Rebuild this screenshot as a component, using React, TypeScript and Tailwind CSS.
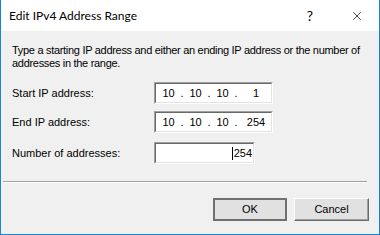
import { X } from 'lucide-react';

function Sunken({ className, children }: { className: string; children?: React.ReactNode }) {
  return (
    <div className={`border border-t-[#a0a0a0] border-l-[#a0a0a0] border-b-white border-r-white ${className}`}>
      <div className="flex h-full items-center border border-t-[#696969] border-l-[#696969] border-b-[#e3e3e3] border-r-[#e3e3e3] bg-white">
        {children}
      </div>
    </div>
  );
}

function IpField({ parts }: { parts: string[] }) {
  return (
    <Sunken className="h-[22px] w-[119px]">
      <div className="flex w-full pl-[4px]">
        <span className="w-[17px] text-center">{parts[0]}</span>
        <span className="w-[10px] text-center">.</span>
        <span className="w-[17px] text-center">{parts[1]}</span>
        <span className="w-[10px] text-center">.</span>
        <span className="w-[17px] text-center">{parts[2]}</span>
        <span className="w-[10px] text-center">.</span>
        <span className="flex-1 text-center">{parts[3]}</span>
      </div>
    </Sunken>
  );
}

export default function App() {
  return (
    <div
      className="flex h-[235px] w-[380px] flex-col border-x border-b border-[#1883d7] bg-[#f0f0f0] text-[11px] text-black"
      style={{ fontFamily: '"Liberation Sans", Arial, sans-serif' }}
    >
      <div className="flex h-[31px] shrink-0 items-center bg-white pl-[8px]">
        <span className="text-[12px]" style={{ fontFamily: 'Lato, "Noto Sans", sans-serif' }}>
          Edit IPv4 Address Range
        </span>
        <span className="ml-auto mr-[37px] text-[14px]" style={{ fontFamily: 'Lato, sans-serif' }}>
          ?
        </span>
        <X className="mr-[15px] h-[14px] w-[14px]" strokeWidth={1.2} />
      </div>

      <div className="px-[11px] pt-[13px] leading-[13px] tracking-[-0.3px]">
        Type a starting IP address and either an ending IP address or the number of addresses in the range.
      </div>

      <div className="mt-[12px] flex flex-col gap-[7px] pl-[11px]">
        <div className="flex items-center">
          <span className="w-[142px]">Start IP address:</span>
          <IpField parts={['10', '10', '10', '1']} />
        </div>
        <div className="flex items-center">
          <span className="w-[142px]">End IP address:</span>
          <IpField parts={['10', '10', '10', '254']} />
        </div>
        <div className="mt-[2px] flex items-center">
          <span className="w-[142px]">Number of addresses:</span>
          <Sunken className="h-[22px] w-[101px]">
            <div className="flex w-full justify-end pr-[1px]">
              <span className="mr-[1px] h-[13px] w-px self-center bg-black" />
              <span>254</span>
            </div>
          </Sunken>
        </div>
      </div>

      <div className="ml-[2px] mr-[12px] mt-[17px] border-b border-t border-b-white border-t-[#a0a0a0]" />

      <div className="mt-[15px] flex justify-end gap-[7px] pr-[10px]">
        <button className="h-[23px] w-[74px] border-2 border-[#707070] bg-[#e1e1e1] text-[11px]">
          <span className="block border border-[#e1e1e1] leading-[17px]">OK</span>
        </button>
        <button className="h-[23px] w-[75px] border border-t-white border-l-white border-b-[#696969] border-r-[#696969] bg-[#e1e1e1] text-[11px] shadow-[inset_-1px_-1px_0_#a0a0a0]">
          Cancel
        </button>
      </div>
    </div>
  );
}
